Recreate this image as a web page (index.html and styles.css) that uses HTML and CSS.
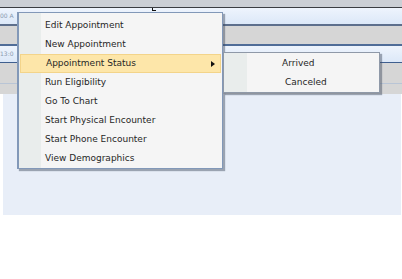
FILE: index.html
```html
<!DOCTYPE html>
<html lang="en">
	<head>
		<meta charset="UTF-8" />
		<meta name="viewport" content="width=device-width, initial-scale=1.0" />
		<title>Schedule</title>
		<link rel="stylesheet" href="styles.css">
	</head>
	<body>
		<div class="schedule">
			<div class="header"></div>
			<div class="slot slot-time">
				<span class="time">00 A</span>
				<span class="cursor-mark"></span>
			</div>
			<div class="slot slot-grey"></div>
			<div class="slot slot-time slot-time-2">
				<span class="time">13:0</span>
			</div>
			<div class="slot slot-grey slot-grey-2"></div>
			<div class="slot slot-grey slot-grey-3"></div>
			<div class="panel"></div>

			<ul class="menu">
				<li class="menu-item">Edit Appointment</li>
				<li class="menu-item">New Appointment</li>
				<li class="menu-item active">Appointment Status <span class="arrow"></span></li>
				<li class="menu-item">Run Eligibility</li>
				<li class="menu-item">Go To Chart</li>
				<li class="menu-item">Start Physical Encounter</li>
				<li class="menu-item">Start Phone Encounter</li>
				<li class="menu-item">View Demographics</li>
			</ul>

			<ul class="menu submenu">
				<li class="menu-item arrived">Arrived</li>
				<li class="menu-item canceled">Canceled</li>
			</ul>
		</div>
	</body>
</html>
```

FILE: styles.css
```css
body {
	margin: 0;
	padding: 0;
	background: #fff;
	font-family: "DejaVu Sans", Verdana, sans-serif;
}
.schedule {
	position: relative;
	width: 402px;
	height: 279px;
}
.header {
	height: 7px;
	background: #cbcfd5;
	border-bottom: 1px solid #3a3d42;
}
.slot {
	display: flex;
	align-items: flex-start;
}
.slot-time {
	height: 16px;
	background: linear-gradient(#eef4fd, #dce8f8);
	border-bottom: 2px solid #5d6f8c;
}
.slot-time-2 {
	height: 16px;
	border-bottom: 1px solid #3f5f8f;
}
.time {
	font-size: 6px;
	color: #8a9ab0;
	width: 17px;
	padding-top: 4px;
	overflow: hidden;
	white-space: nowrap;
}
.cursor-mark {
	margin-left: 135px;
	width: 3px;
	height: 2px;
	border-left: 1px solid #111;
	border-bottom: 1px solid #111;
}
.slot-grey {
	height: 18px;
	background: #d6d6d6;
	border-bottom: 2px solid #506d98;
}
.slot-grey-2 {
	height: 20px;
	border-bottom: 1px solid #b9c5d6;
}
.slot-grey-3 {
	height: 10px;
	border-bottom: none;
}
.panel {
	margin-left: 3px;
	width: 398px;
	height: 121px;
	background: #e8eef8;
}
.menu {
	position: absolute;
	left: 17px;
	top: 12px;
	width: 203px;
	margin: 0;
	padding: 3px 0 0 0;
	list-style: none;
	background: linear-gradient(90deg, #e9edec 0, #e9edec 22px, #f5f5f5 22px);
	border: 1px solid #8298b8;
	border-left-width: 2px;
	box-shadow: 2px 2px 1px rgba(60, 70, 90, 0.45);
}
.menu-item {
	position: relative;
	height: 19px;
	line-height: 19px;
	padding-left: 26px;
	font-size: 9px;
	color: #262626;
	white-space: nowrap;
}
.menu-item.active {
	margin: 0 1px 0 1px;
	padding-left: 25px;
	height: 17px;
	line-height: 17px;
	background: #fde6a9;
	border: 1px solid #f3d48a;
}
.arrow {
	position: absolute;
	right: 5px;
	top: 6px;
	width: 0;
	height: 0;
	border-top: 3px solid transparent;
	border-bottom: 3px solid transparent;
	border-left: 4px solid #111;
}
.submenu {
	left: 223px;
	top: 52px;
	width: 155px;
	padding: 1px 0 0 0;
	border-left-width: 1px;
	border-color: #8f99a8;
	background: linear-gradient(90deg, #e9edec 0, #e9edec 23px, #f5f5f5 23px);
}
.submenu .menu-item {
	padding-left: 58px;
}
.submenu .canceled {
	padding-left: 61px;
}
```
